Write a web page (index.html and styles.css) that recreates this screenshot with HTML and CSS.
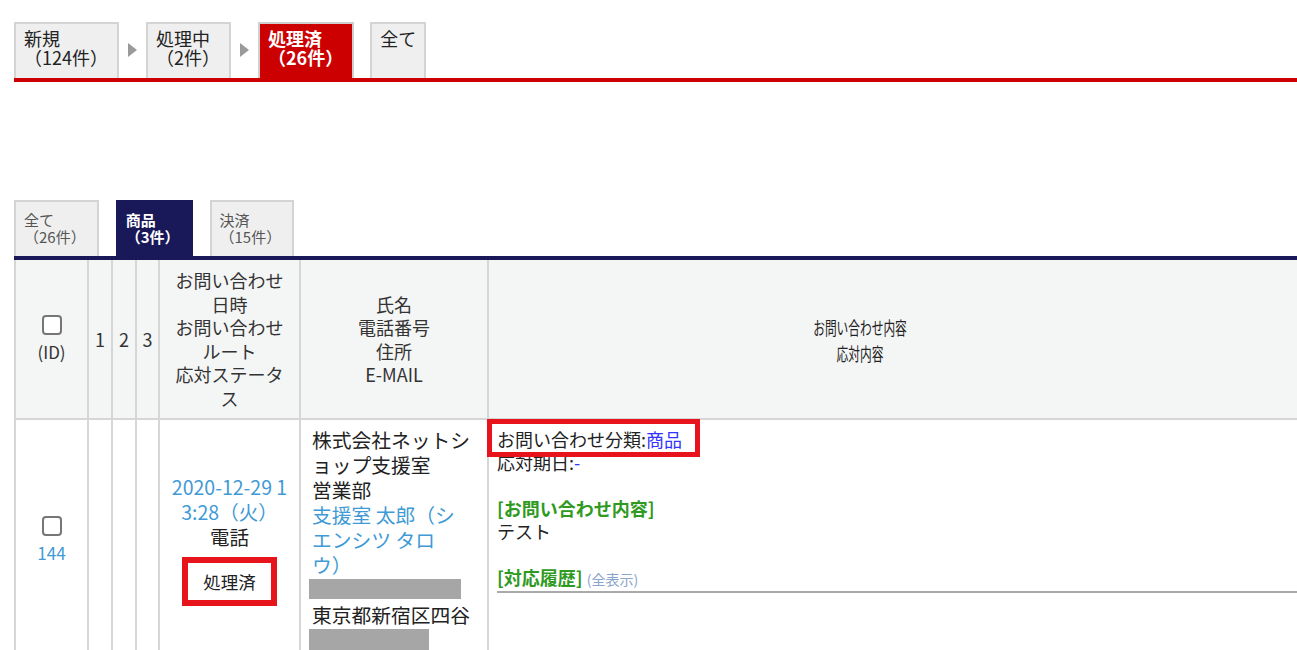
FILE: index.html
```html
<!DOCTYPE html>
<html lang="ja">
<head>
    <meta charset="UTF-8">
    <meta name="viewport" content="width=device-width, initial-scale=1.0">
    <title>お問い合わせ一覧</title>
    <link rel="stylesheet" href="styles.css">
</head>
<body>
    <div class="status-tabs">
        <a class="status-tab" href="#">新規<br>（124件）</a>
        <span class="arrow"></span>
        <a class="status-tab" href="#">処理中<br>（2件）</a>
        <span class="arrow"></span>
        <a class="status-tab active" href="#">処理済<br>（26件）</a>
        <a class="status-tab all" href="#">全て</a>
    </div>

    <div class="category-tabs">
        <a class="category-tab" href="#">全て<br>（26件）</a>
        <a class="category-tab active" href="#">商品<br>（3件）</a>
        <a class="category-tab" href="#">決済<br>（15件）</a>
    </div>

    <table class="inquiry-table">
        <colgroup>
            <col style="width: 73px">
            <col style="width: 24px">
            <col style="width: 24px">
            <col style="width: 23px">
            <col style="width: 141px">
            <col style="width: 188px">
            <col>
        </colgroup>
        <thead>
            <tr>
                <th><input type="checkbox" class="check"><span class="id-label">(ID)</span></th>
                <th>1</th>
                <th>2</th>
                <th>3</th>
                <th>お問い合わせ<br>日時<br>お問い合わせ<br>ルート<br>応対ステータス</th>
                <th>氏名<br>電話番号<br>住所<br>E-MAIL</th>
                <th class="content-head"><span class="narrow">お問い合わせ内容<br>応対内容</span></th>
            </tr>
        </thead>
        <tbody>
            <tr>
                <td class="id-cell">
                    <input type="checkbox" class="check">
                    <a class="link" href="#">144</a>
                </td>
                <td></td>
                <td></td>
                <td></td>
                <td class="date-cell">
                    <a class="link" href="#">2020-12-29 13:28（火）</a><br>
                    電話
                    <span class="status-badge">処理済</span>
                </td>
                <td class="customer-cell">
                    株式会社ネットショップ支援室<br>
                    営業部<br>
                    <a class="link" href="#">支援室 太郎（シエンシツ タロウ）</a>
                    <span class="masked phone"></span>
                    東京都新宿区四谷
                    <span class="masked address"></span>
                </td>
                <td class="content-cell">
                    <div>お問い合わせ分類:<a class="blue" href="#">商品</a></div>
                    <div>応対期日:<span class="blue">-</span></div>
                    <div class="blank"></div>
                    <div class="section-title">[お問い合わせ内容]</div>
                    <div>テスト</div>
                    <div class="blank"></div>
                    <div class="history"><span class="section-title">[対応履歴]</span> <a class="small-link" href="#">(全表示)</a></div>
                    <span class="highlight"></span>
                </td>
            </tr>
        </tbody>
    </table>
</body>
</html>
```

FILE: styles.css
```css
body {
    margin: 0;
    padding: 22px 0 0 14px;
    font-family: "Noto Sans CJK JP", "Noto Sans", sans-serif;
    color: #222;
    background-color: #fff;
    overflow: hidden;
    text-spacing-trim: space-all;
}

/* status tabs */
.status-tabs {
    display: flex;
    align-items: center;
    gap: 9px;
    border-bottom: 4px solid #cc0000;
}
.status-tab {
    box-sizing: border-box;
    height: 56px;
    padding: 5px 9px 0 8px;
    background-color: #efefef;
    border: 2px solid #d4d4d4;
    border-bottom: none;
    font-size: 18px;
    line-height: 19px;
    color: #222;
    text-decoration: none;
}
.status-tab.active {
    background-color: #cc0000;
    border-color: #cfcfcf;
    color: #fff;
    font-weight: bold;
}
.status-tab.all {
    margin-left: 7px;
    padding-right: 8px;
}
.arrow {
    width: 0;
    height: 0;
    border-left: 9px solid #9a9a9a;
    border-top: 7px solid transparent;
    border-bottom: 7px solid transparent;
}

/* category tabs */
.category-tabs {
    display: flex;
    align-items: flex-end;
    gap: 17px;
    margin-top: 118px;
    border-bottom: 4px solid #191959;
}
.category-tab {
    box-sizing: border-box;
    height: 56px;
    padding: 9px 11px 0 8px;
    background-color: #efefef;
    border: 2px solid #d4d4d4;
    border-bottom: none;
    font-size: 15px;
    line-height: 17px;
    color: #555;
    text-decoration: none;
}
.category-tab.active {
    background-color: #191959;
    border-color: #191959;
    color: #fff;
    font-weight: bold;
}

/* table */
.inquiry-table {
    width: 1330px;
    border-collapse: collapse;
    table-layout: fixed;
}
.inquiry-table th,
.inquiry-table td {
    border: 2px solid #d6d6d6;
}
.inquiry-table thead th {
    border-top: none;
    background-color: #f4f5f5;
    font-weight: normal;
    font-size: 18px;
    line-height: 23.5px;
    color: #333;
    padding: 9px 2px 8px;
    text-align: center;
    vertical-align: middle;
}
.inquiry-table thead th:nth-child(5),
.inquiry-table thead th:nth-child(6) {
    padding-left: 8px;
    padding-right: 8px;
}
.inquiry-table thead th.content-head {
    padding: 9px 120px 8px 8px;
}
.narrow {
    display: inline-block;
    font-size: 18px;
    line-height: 26px;
    color: #222;
    transform: scaleX(0.65);
}
.check {
    appearance: none;
    display: block;
    box-sizing: border-box;
    width: 20px;
    height: 20px;
    margin: 0 auto;
    border: 2px solid #767676;
    border-radius: 4px;
    background: #fff;
}
.id-label {
    display: block;
    margin-top: 5px;
    font-size: 17px;
}

.inquiry-table td {
    font-size: 19.75px;
    line-height: 25px;
    padding: 7px 14px 7px 11px;
    vertical-align: top;
}
.link {
    color: #3f9ad6;
    text-decoration: none;
}
.inquiry-table td.id-cell {
    padding: 0;
    text-align: center;
    vertical-align: middle;
    font-size: 17px;
    line-height: 23px;
}
.id-cell .link {
    display: block;
    margin-top: 5px;
}
.inquiry-table td.date-cell {
    padding: 0 9px;
    text-align: center;
    vertical-align: middle;
    word-break: break-all;
    font-size: 19.5px;
}
.status-badge {
    display: block;
    width: fit-content;
    margin: 8px auto 0;
    padding: 7px 15px;
    border: 6px solid #e8141c;
    background: #fff;
    font-size: 17.5px;
    line-height: 23px;
}
.masked {
    display: block;
    background-color: #a6a6a6;
    margin-left: -3px;
}
.masked.phone {
    width: 152px;
    height: 20px;
    margin-top: 2px;
    margin-bottom: 3px;
}
.masked.address {
    width: 120px;
    height: 23px;
    margin-top: 2px;
}

.inquiry-table td.content-cell {
    position: relative;
    padding: 8px 0 8px 8px;
    font-size: 18px;
    line-height: 23px;
    color: #222;
}
.blank {
    height: 23px;
}
.blue {
    color: #3333ff;
    text-decoration: none;
}
.section-title {
    color: #2f9a1f;
    font-weight: bold;
}
.small-link {
    color: #8aa4cc;
    font-size: 14px;
    text-decoration: none;
}
.history {
    border-bottom: 2px solid #aaa;
}
.highlight {
    position: absolute;
    left: -2px;
    top: -1px;
    width: 213px;
    height: 38px;
    box-sizing: border-box;
    border: 5px solid #e8141c;
}
```
